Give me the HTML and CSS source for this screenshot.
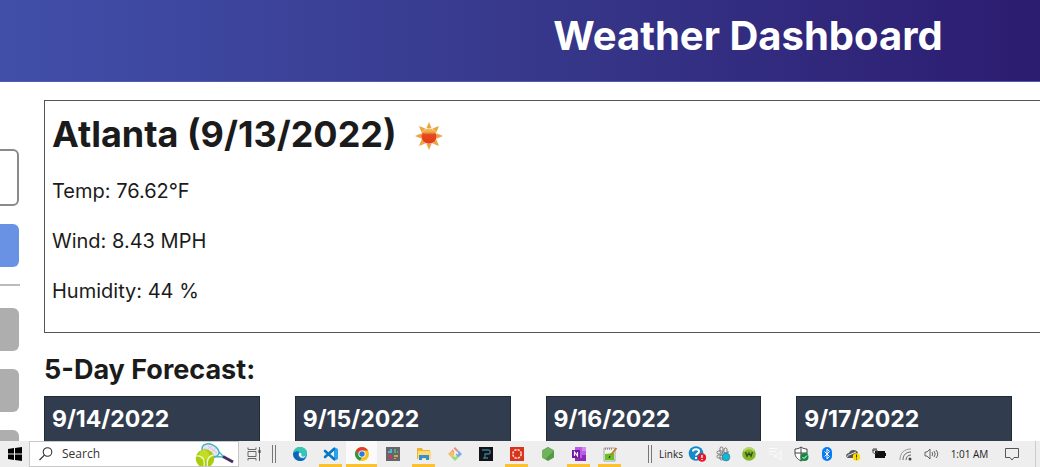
FILE: index.html
```html
<!DOCTYPE html>
<html lang="en">
<head>
<meta charset="utf-8">
<meta name="viewport" content="width=device-width, initial-scale=1">
<title>Weather Dashboard</title>
<link rel="stylesheet" href="styles.css">
</head>
<body>
<div class="page">
  <header class="banner"><h1 class="banner-title">Weather Dashboard</h1></header>
  <div class="content">
    <aside class="sidebar">
      <input class="city-input" type="text" aria-label="Search for a city">
      <button class="side-button primary" type="button" aria-label="Search city"></button>
      <hr class="rule">
      <div class="history">
        <button class="side-button" type="button" aria-label="Recent city 1"></button>
        <button class="side-button" type="button" aria-label="Recent city 2"></button>
        <button class="side-button" type="button" aria-label="Recent city 3"></button>
      </div>
    </aside>
    <main class="weather">
      <section class="current">
        <h2 class="city">Atlanta (9/13/2022)
          <svg class="sun" viewBox="0 0 28 28" aria-hidden="true">
            <defs><linearGradient id="sunfill" x1="0" y1="0" x2="0" y2="1"><stop offset="0" stop-color="#f3c667"/><stop offset=".25" stop-color="#efa744"/><stop offset=".42" stop-color="#e5481e"/><stop offset="1" stop-color="#e33d18"/></linearGradient></defs>
            <path fill="#eaa640" d="M14 0l2.500 6h-5zM14 28l2.500-6h-5zM0 14l6-2.500v5zM28 14l-6-2.500v5zM4 4l6.500 2.600-3.900 3.900zM24 4l-6.500 2.600 3.900 3.900zM4 24l6.500-2.600-3.900-3.900zM24 24l-6.500-2.600 3.900-3.900z"/>
            <circle cx="14" cy="14" r="7.800" fill="url(#sunfill)"/>
          </svg>
        </h2>
        <div class="readings">
          <p class="reading">Temp: 76.62°F</p>
          <p class="reading">Wind: 8.43 MPH</p>
          <p class="reading">Humidity: 44 %</p>
        </div>
      </section>
      <h3 class="forecast-title">5-Day Forecast:</h3>
      <div class="forecast">
        <article class="day"><h4 class="date">9/14/2022</h4></article>
        <article class="day"><h4 class="date">9/15/2022</h4></article>
        <article class="day"><h4 class="date">9/16/2022</h4></article>
        <article class="day"><h4 class="date">9/17/2022</h4></article>
      </div>
    </main>
  </div>
</div>
<footer class="taskbar">
  <button class="start" type="button" aria-label="Start"><svg class="icon" viewBox="0 0 16 16"><path d="M1 3l6-1v5.500H1zM8 2l7-1v6.500H8zM1 8.500h6V14l-6-1zM8 8.500h7V15l-7-1z" fill="#000"/></svg></button>
  <label class="search">
    <svg class="icon" viewBox="0 0 16 16"><circle cx="9.500" cy="6" r="4.300" fill="none" stroke="#333" stroke-width="1.100"/><path d="M6.400 9.100L1.500 14" stroke="#333" stroke-width="1.200"/></svg>
    <input class="search-input" type="text" placeholder="Search" aria-label="Search">
    <svg class="tennis" viewBox="0 0 40 24"><ellipse cx="15.500" cy="8.500" rx="9" ry="6" transform="rotate(25 15.500 8.500)" fill="#e9e4ef" stroke="#3fb5c4" stroke-width="1.500"/><path d="M9 6l10 7M13 4l9 7M9 10l8-6M13 13l8-7" stroke="#c4b9d2" stroke-width=".6"/><path d="M18 14.500l11 .5M24 10l5 5" stroke="#3fb5c4" stroke-width="1.300"/><path d="M28 14.500l10 5.500" stroke="#4b2f63" stroke-width="3"/><circle cx="10" cy="16.500" r="9.300" fill="#a9cc0c"/><circle cx="9" cy="13" r="5" fill="#c3dc24"/><path d="M1 14c7-1 9 4 8 10M18.500 13c-5 1-7 5-6 11" fill="none" stroke="#f1f6cf" stroke-width="1.300"/></svg>
  </label>
  <button class="task-view" type="button" aria-label="Task view"><svg class="icon" viewBox="0 0 16 16"><path d="M2 1.500v2h8v-2M2 14.500v-2h8v2M2 5.500h8v5H2zM13.500 1v14" fill="none" stroke="#666"/><path d="M12.500 4h2v3h-2z" fill="#444"/></svg></button>
  <span class="grip"></span>
  <nav class="apps" aria-label="Apps">
    <button class="app" type="button" aria-label="Edge"><svg class="icon" viewBox="0 0 16 16"><circle cx="8" cy="8" r="7" fill="#1686cf"/><path d="M1.500 7C2 3 5 1 8 1c4 0 7 2.500 7 6 0 2.500-2 3.500-4 3.500-1.500 0-2-.5-1.500-1.500C10 7 8 5.500 6 5.500 4 5.500 2.500 6 1.500 7z" fill="#38c6b4"/><path d="M1.200 7.500c2-3 5-2 6-1.300C5 7 5 12 10 13c2 .4 3-.3 4-1-2 3-5.500 3.500-8 2.500-3-1-5-4-4.800-7z" fill="#1262b3"/><path d="M7.500 6.500c1.500 0 2.300 1 2 2.500-.3 1 0 1.500 1.500 1.500 1 0 2-.2 3-1-1 2-2.500 2.500-4 2.300-2.500-.3-4-3.300-2.500-5.300z" fill="#fff"/></svg></button>
    <button class="app open" type="button" aria-label="Visual Studio Code"><svg class="icon" viewBox="0 0 16 16"><path d="M11 1l4 2v10l-4 2z" fill="#2aa3ef"/><path d="M11 3L2 11M11 13L2 5" stroke="#0878be" stroke-width="2.600" stroke-linecap="round"/></svg></button>
    <button class="app open active" type="button" aria-label="Chrome"><svg class="icon" viewBox="0 0 16 16"><circle cx="8" cy="8" r="7" fill="#fbc116"/><path d="M1.900 4.500A7 7 0 0 1 14.100 4.500H8L5 9.800z" fill="#e33b2e"/><path d="M1.900 4.500L5 9.800 8 11l-2 3.700A7 7 0 0 1 1.900 4.500z" fill="#279847"/><circle cx="8" cy="8" r="3.600" fill="#fff"/><circle cx="8" cy="8" r="2.700" fill="#277be5"/></svg></button>
    <button class="app" type="button" aria-label="Slack"><svg class="icon" viewBox="0 0 16 16"><path d="M1 1h14v14H1z" fill="#66666a"/><path d="M3 6h4M6 3v2" stroke="#48b9cf" stroke-width="2"/><path d="M10 3v4M12 6h1" stroke="#50ad83" stroke-width="2"/><path d="M9 10h4M10 12v1" stroke="#d9a441" stroke-width="2"/><path d="M6 9v4M3 10h2" stroke="#cd395e" stroke-width="2"/></svg></button>
    <button class="app open" type="button" aria-label="File Explorer"><svg class="icon" viewBox="0 0 16 16"><path d="M1 2h5l1 2h7v9H1z" fill="#efb52e"/><path d="M2 5h13v8H2z" fill="#ffdc72"/><path d="M3 14V9h10v5h-3v-2H6v2z" fill="#348fd8"/></svg></button>
    <button class="app" type="button" aria-label="Git"><svg class="icon" viewBox="0 0 16 16"><path d="M8 1l3.500 3.500L8 8 4.500 4.500z" fill="#ee8c7e"/><path d="M4.500 4.500L8 8l-3.500 3.500L1 8z" fill="#f2bd6c"/><path d="M11.500 4.500L15 8l-3.500 3.500L8 8z" fill="#7da8ee"/><path d="M8 8l3.500 3.500L8 15l-3.500-3.500z" fill="#9bdd70"/><path d="M6 3l5 5M8 5v6" stroke="#fff" stroke-width="1.200"/></svg></button>
    <button class="app" type="button" aria-label="Pycharm"><svg class="icon" viewBox="0 0 16 16"><path d="M1 1h14v14H1z" fill="#101418"/><path d="M4 4h6c3 0 3 4 0 4H7v4M5 12h5" fill="none" stroke="#3b7893" stroke-width="1.300"/></svg></button>
    <button class="app open" type="button" aria-label="Canvas"><svg class="icon" viewBox="0 0 16 16"><path d="M1 1h14v14H1z" fill="#d8341d"/><circle cx="8" cy="8" r="4.200" fill="none" stroke="#ffd5cc" stroke-width="1.600" stroke-dasharray="2.300 1"/></svg></button>
    <button class="app" type="button" aria-label="Node"><svg class="icon" viewBox="0 0 16 16"><path d="M8 1l6 3.500v7L8 15l-6-3.500v-7z" fill="#529b42"/><path d="M8 1l6 3.500-9 8.700-3-1.700v-7z" fill="#6fb45c"/></svg></button>
    <button class="app open" type="button" aria-label="OneNote"><svg class="icon" viewBox="0 0 16 16"><path d="M4 1h11v14H4z" fill="#bd5be4"/><path d="M11 1h4v4h-4z" fill="#d08ced"/><path d="M11 9h4v6H4v-3h7z" fill="#8a2bb8"/><path d="M1 4h8v8H1z" fill="#7416a3"/><path d="M3.500 10V6l3 4V6" fill="none" stroke="#fff" stroke-width="1.200"/></svg></button>
    <button class="app open" type="button" aria-label="Notepad++"><svg class="icon" viewBox="0 0 16 16"><path d="M2 2h11v13H2z" fill="#f3f3ee" stroke="#888" stroke-width=".7"/><path d="M3 8l9-1v7H3z" fill="#64c522"/><path d="M3 3h8" stroke="#555" stroke-dasharray="1 1"/><path d="M14.500 2L8 10" stroke="#c47b2c" stroke-width="1.800"/><path d="M8 10l-1 2" stroke="#222"/></svg></button>
  </nav>
  <span class="grip links-grip"></span>
  <span class="links">Links</span>
  <nav class="tray" aria-label="System tray">
    <button class="tray-item" type="button" aria-label="Help"><svg class="icon large" viewBox="0 0 18 16"><circle cx="8" cy="7.500" r="7.300" fill="#138bc7"/><path d="M5 5.500c0-3 6-3 6 0 0 2-3 2-3 4M8 11v2" fill="none" stroke="#fff" stroke-width="2"/><circle cx="14" cy="11.500" r="4.300" fill="#e7182b"/><path d="M14 9v3M14 13v1" stroke="#fff" stroke-width="1.400"/></svg></button>
    <button class="tray-item" type="button" aria-label="Slack notifications"><svg class="icon" viewBox="0 0 16 16"><g fill="none" stroke="#777"><rect x="5" y="1" width="3" height="6" rx="1.500"/><rect x="9" y="2" width="3" height="5" rx="1.500"/><rect x="2" y="5" width="6" height="3" rx="1.500"/><rect x="2" y="9" width="6" height="3" rx="1.500"/><rect x="5" y="9" width="3" height="5" rx="1.500"/><path d="M9 7h4V5"/></g><circle cx="11" cy="11" r="3.900" fill="#12b6dc" stroke="#356d7a" stroke-width=".6"/></svg></button>
    <button class="tray-item" type="button" aria-label="Webroot"><svg class="icon" viewBox="0 0 16 16"><circle cx="8" cy="8" r="6.800" fill="#86b72a"/><path d="M3 5a6 6 0 0 1 10 0" stroke="#b6d96c" stroke-width="2" fill="none"/><path d="M4.500 6l1.500 4 2-3 2 3 1.500-4" fill="none" stroke="#35551a" stroke-width="1.500"/></svg></button>
    <button class="tray-item" type="button" aria-label="Audio manager"><svg class="icon" viewBox="0 0 16 16"><path d="M2 2.500h8M2 5.500h7M2 8.500h4" stroke="#fbfbfb"/><path d="M7.500 9H10l4-4v9l-4-3H7.500z" fill="none" stroke="#fbfbfb"/></svg></button>
    <button class="tray-item" type="button" aria-label="Security"><svg class="icon" viewBox="0 0 16 16"><path d="M8 1c2 1.500 4 2 6 2v4c0 4-2.500 6-6 8-3.500-2-6-4-6-8V3c2 0 4-.5 6-2zM8 1v14M2 7h12" fill="#fff" stroke="#444"/><circle cx="11.500" cy="11" r="4" fill="#138a42"/><path d="M9.500 11l1.500 1.500 3-3" fill="none" stroke="#fff"/></svg></button>
    <button class="tray-item" type="button" aria-label="Bluetooth"><svg class="icon" viewBox="0 0 16 16"><rect x="3" y="1" width="10" height="14" rx="5" fill="#087af4"/><path d="M5.500 5.500l5 5L8 13V3l2.500 2.500-5 5" fill="none" stroke="#fff"/></svg></button>
    <button class="tray-item" type="button" aria-label="OneDrive"><svg class="icon" viewBox="0 0 16 16"><path d="M3 12c-3-1-2-5 1-5 1-4 8-4 9 0l-3 5z" fill="#555"/><path d="M3 11c-1-1 0-2 1-2l7-3" stroke="#eee" fill="none"/><circle cx="11.500" cy="11" r="3.700" fill="#ffdc00"/><path d="M11.500 8.500v3M11.500 12.500v1" stroke="#333"/></svg></button>
    <button class="tray-item" type="button" aria-label="Battery"><svg class="icon" viewBox="0 0 16 16"><path d="M4 5h10v2h1v3h-1v2H4z" fill="#111"/><path d="M1 4h5v2c0 2-4 2-4 0V4M3 2v2M5 2v2" fill="none" stroke="#444"/></svg></button>
    <button class="tray-item" type="button" aria-label="Wi-Fi"><svg class="icon" viewBox="0 0 16 16"><g fill="none"><path d="M3 14C3 7 7 3 14 3" stroke="#999"/><path d="M6 14c0-5 3-8 8-8M9 14c0-3 2-5 5-5" stroke="#666"/></g><circle cx="13" cy="13" r="1.500" fill="#444"/></svg></button>
    <button class="tray-item" type="button" aria-label="Volume"><svg class="icon" viewBox="0 0 16 16"><path d="M2 6h2l3-3v10l-3-3H2zM9 6q1.500 2 0 4M11 5q2.500 3 0 6M13 4q3.500 4 0 8" fill="none" stroke="#555" stroke-width=".9"/></svg></button>
  </nav>
  <time class="clock">1:01 AM</time>
  <button class="notices" type="button" aria-label="Notifications"><svg class="icon" viewBox="0 0 16 16"><path d="M1.500 2.500h13v9H10L8 14l-2-2.500H1.500z" fill="none" stroke="#555"/></svg></button>
</footer>
</body>
</html>
```
FILE: styles.css
```css
* { box-sizing: border-box; }
body {
  margin: 0;
  height: 100vh;
  display: flex;
  flex-direction: column;
  overflow: hidden;
  background: #fff;
  color: #1b1b1b;
  font-family: Inter, "Liberation Sans", sans-serif;
}
button { border: 0; padding: 0; background: none; font: inherit; }
h1, h2, h3, h4, p { margin: 0; }
.page { flex: 1; min-height: 0; overflow: hidden; }
.banner {
  padding: 10px 0 20px 456px;
  border-bottom: 1px solid #5559b0;
  background: linear-gradient(90deg, #414fa9, #363689 55%, #2c1c70);
  color: #fff;
  text-align: center;
}
.banner-title { font-size: 40px; line-height: 51px; font-weight: 700; }
.content { display: flex; }
.sidebar { flex: none; width: 44px; padding: 67px 25px 0 0; }
.city-input {
  display: block;
  width: 38px;
  height: 57px;
  margin: 0 0 18px -19px;
  border: 2px solid #8a8a8a;
  border-radius: 6px;
  background: #fff;
}
.side-button {
  display: block;
  width: 38px;
  height: 43px;
  margin-left: -19px;
  border-radius: 6px;
  background: #aeaeae;
}
.side-button.primary { background: #6991e4; }
.rule { margin: 17px -1px 22px 0; border: 0; border-top: 2px solid #bbb; }
.history { display: grid; gap: 18px; }
.weather { flex: 1; min-width: 0; padding-top: 18px; }
.current {
  padding: 7px 7px 14px;
  border: 1px solid #555;
  border-right: 0;
}
.city {
  display: flex;
  align-items: center;
  gap: 18px;
  font-size: 36px;
  line-height: 52px;
  font-weight: 700;
}
.sun { width: 28px; height: 28px; margin-top: 4px; }
.readings { display: grid; gap: 16px; padding: 14px 0 10px; }
.reading { font-size: 20px; line-height: 34px; }
.forecast-title { margin: 19px 0 8px; font-size: 27px; line-height: 36px; }
.forecast { display: grid; grid-template-columns: repeat(4, 1fr); gap: 35px; padding-right: 28px; }
.day {
  height: 160px;
  padding: 7px;
  border: 1px solid #222a36;
  background: #323c4f;
  color: #fff;
}
.date { font-size: 23px; line-height: 30px; }
.taskbar {
  flex: none;
  display: flex;
  align-items: stretch;
  height: 26px;
  background: #eee;
  color: #222;
  font-family: "Open Sans", "Noto Sans", sans-serif;
}
.taskbar button, .search, .links, .clock { display: flex; align-items: center; justify-content: center; }
.icon { display: block; width: 16px; height: 16px; }
.icon.large { width: 18px; }
.start { width: 29px; }
.search { width: 210px; padding-left: 8px; border: 1px solid #c8c8c8; background: #fff; }
.search-input {
  flex: 1;
  min-width: 0;
  padding: 0 0 0 8px;
  border: 0;
  outline: 0;
  background: none;
  font: 12px/24px "Open Sans", "Noto Sans", sans-serif;
}
.search-input::placeholder { color: #333; opacity: 1; }
.tennis { width: 40px; height: 24px; margin-right: 3px; }
.task-view { width: 29px; }
.grip {
  width: 4px;
  height: 18px;
  margin: 4px 8px 0 4px;
  border: solid #777;
  border-width: 0 1px;
}
.apps { display: flex; }
.app { width: 31px; border: solid transparent; border-width: 2px 0; }
.app.open { background: linear-gradient(#fcc12f, #fcc12f) center bottom / 23px 3px no-repeat; background-origin: border-box; }
.app.active { background-color: #fafafa; background-size: 31px 3px; }
.links-grip { margin-left: auto; margin-right: 7px; }
.links { width: 24px; font-size: 10px; }
.tray { display: flex; margin-left: 1px; }
.tray-item { width: 26px; }
.clock { width: 51px; font-size: 10px; }
.notices { width: 34px; }
.taskbar::after { content: ""; width: 4px; margin-left: 6px; border-left: 1px solid #ccc; }
```
